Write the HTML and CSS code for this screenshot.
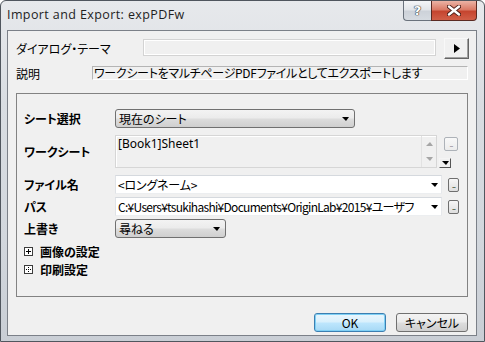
FILE: index.html
```html
<!DOCTYPE html>
<html lang="ja">
<head>
    <meta charset="UTF-8">
    <title>Import and Export: expPDFw</title>
    <link rel="stylesheet" href="styles.css">
</head>
<body>
    <div class="window">
        <div class="titlebar">
            <span class="title">Import and Export: expPDFw</span>
            <div class="caption">
                <span class="cap help">?</span>
                <span class="cap close">
                    <svg width="14" height="11" viewBox="0 0 14 11">
                        <path d="M2 1.5 L12 9.5 M12 1.5 L2 9.5" stroke="#4a1d16" stroke-width="4.2" stroke-linecap="round"/>
                        <path d="M2 1.5 L12 9.5 M12 1.5 L2 9.5" stroke="#fff" stroke-width="2.4" stroke-linecap="round"/>
                    </svg>
                </span>
            </div>
        </div>

        <div class="client">
            <div class="top-row theme-row">
                <span class="theme-lbl">ダイアログ・テーマ</span>
                <span class="theme-box"></span>
                <span class="arrow-btn">
                    <svg width="6" height="9" viewBox="0 0 6 9"><polygon points="0,0 6,4.5 0,9" fill="#000"/></svg>
                </span>
            </div>
            <div class="top-row desc-row">
                <span class="desc-lbl">説明</span>
                <span class="desc-box">ワークシートをマルチページPDFファイルとしてエクスポートします</span>
            </div>

            <div class="group">
                <div class="grow sheet-row">
                    <span class="blbl">シート選択</span>
                    <span class="select sheet-sel">現在のシート<i class="tri"></i></span>
                </div>
                <div class="grow ws-row">
                    <span class="blbl">ワークシート</span>
                    <div class="ws-box">
                        <span class="ws-text">[Book1]Sheet1</span>
                        <div class="ws-scroll">
                            <i class="tri-up"></i>
                            <i class="tri-down"></i>
                        </div>
                    </div>
                    <div class="ws-side">
                        <span class="dots-btn off">...</span>
                        <span class="mini-drop"><i class="tri"></i></span>
                    </div>
                </div>
                <div class="grow file-row">
                    <span class="blbl">ファイル名</span>
                    <span class="combo"><span class="combo-text">&lt;ロングネーム&gt;</span><i class="tri"></i></span>
                    <span class="dots-btn">...</span>
                </div>
                <div class="grow path-row">
                    <span class="blbl">パス</span>
                    <span class="combo"><span class="combo-text path-text">C:¥Users¥tsukihashi¥Documents¥OriginLab¥2015¥ユーザフ</span><i class="tri"></i></span>
                    <span class="dots-btn">...</span>
                </div>
                <div class="grow over-row">
                    <span class="blbl">上書き</span>
                    <span class="select over-sel">尋ねる<i class="tri"></i></span>
                </div>
                <div class="grow tree img-row">
                    <svg class="tree-ico" width="9" height="9" viewBox="0 0 9 9">
                        <rect x="0.5" y="0.5" width="8" height="8" fill="#fff" stroke="#3c3c3c"/>
                        <path d="M2 4.5 H7 M4.5 2 V7" stroke="#000"/>
                    </svg>
                    <span class="tree-lbl">画像の設定</span>
                </div>
                <div class="grow tree print-row">
                    <svg class="tree-ico" width="9" height="9" viewBox="0 0 9 9">
                        <rect x="0.5" y="0.5" width="8" height="8" fill="#fff" stroke="#3c3c3c"/>
                        <rect x="4" y="2" width="1" height="1" fill="#000"/>
                        <rect x="2" y="4" width="1" height="1" fill="#000"/>
                        <rect x="4" y="4" width="1" height="1" fill="#000"/>
                        <rect x="6" y="4" width="1" height="1" fill="#000"/>
                        <rect x="4" y="6" width="1" height="1" fill="#000"/>
                    </svg>
                    <span class="tree-lbl">印刷設定</span>
                </div>
            </div>

            <div class="buttons">
                <span class="btn ok">OK</span>
                <span class="btn">キャンセル</span>
            </div>
        </div>
    </div>
</body>
</html>
```

FILE: styles.css
```css
*{
    margin: 0;
    padding: 0;
    box-sizing: border-box;
}
body{
    font-family: "Noto Sans CJK JP", sans-serif;
    font-size: 12px;
    color: #000;
    font-feature-settings: "palt" 1;
    background: #fff;
}
i{
    display: block;
}
.window{
    width: 485px;
    height: 342px;
    border: 1px solid #50565e;
    border-radius: 6px 6px 0 0;
    padding: 0 7px 5px 6px;
    background: linear-gradient(#e7e9ec, #d9dde2 30%, #d2d7dd 70%, #c9ced5);
    display: flex;
    flex-direction: column;
}
.titlebar{
    height: 29px;
    flex-shrink: 0;
    display: flex;
    align-items: flex-start;
}
.title{
    font-family: "Open Sans", "Noto Sans", sans-serif;
    font-feature-settings: normal;
    font-size: 12.5px;
    letter-spacing: 0.4px;
    line-height: 17px;
    padding-top: 5px;
    color: #1e1e1e;
}
.caption{
    margin-left: auto;
    display: flex;
}
.cap{
    height: 20px;
    display: flex;
    align-items: center;
    justify-content: center;
    border: 1px solid #6a727c;
    border-top: none;
}
.help{
    width: 28px;
    border-right: none;
    border-radius: 0 0 0 4px;
    background: linear-gradient(#f4f5f7, #e2e5e9 45%, #cdd2d9 55%, #d6dbe1);
    font-family: "DejaVu Sans", sans-serif;
    font-weight: bold;
    font-size: 13px;
    color: #fff;
    text-shadow: 0 0 1px #2e3238, 0 0 1px #2e3238, 0 0 1px #2e3238;
}
.close{
    width: 46px;
    border-color: #5a2a22;
    border-radius: 0 0 4px 0;
    background: linear-gradient(#ebb3a5, #da7b67 45%, #c5452f 55%, #d15f48);
}
.client{
    flex: 1;
    border: 1px solid #7b8088;
    background: #f0f0f0;
    display: flex;
    flex-direction: column;
}

/* top part */
.top-row{
    display: flex;
    padding-left: 8px;
}
.theme-row{
    margin-top: 7px;
    height: 21px;
    align-items: center;
}
.theme-lbl{
    width: 127px;
}
.theme-box{
    width: 293px;
    height: 17px;
    align-self: flex-start;
    margin-top: 1px;
    border: 1px solid #d3d3d3;
    box-shadow: inset 1px 1px 0 #fff, inset -1px -1px 0 #fff;
}
.arrow-btn{
    width: 25px;
    height: 21px;
    margin-left: 8px;
    border: 1px solid;
    border-color: #f8f8f8 #646464 #646464 #f8f8f8;
    box-shadow: inset -1px -1px 0 #a0a0a0;
    display: flex;
    align-items: center;
    justify-content: center;
}
.desc-row{
    margin-top: 7px;
    height: 14px;
    align-items: center;
}
.desc-lbl{
    width: 76px;
}
.desc-box{
    width: 376px;
    height: 14px;
    line-height: 12px;
    padding-left: 1px;
    border: 1px solid;
    border-color: #b4b4b4 #fff #fff #b4b4b4;
    white-space: nowrap;
    letter-spacing: -0.3px;
}

/* group */
.group{
    margin: 13px 8px 0 8px;
    height: 204px;
    border: 1px solid #828282;
    display: flex;
    flex-direction: column;
}
.grow{
    display: flex;
    align-items: center;
    padding-left: 7px;
}
.blbl{
    width: 91px;
    flex-shrink: 0;
    font-weight: bold;
}
.tri{
    width: 0;
    height: 0;
    flex-shrink: 0;
    border-left: 4px solid transparent;
    border-right: 3px solid transparent;
    border-top: 4px solid #000;
}
.select{
    height: 19px;
    border: 1px solid #707070;
    border-radius: 3px;
    background: linear-gradient(#f3f3f3, #ebebeb 48%, #dddddd 52%, #cfcfcf);
    display: flex;
    align-items: center;
    justify-content: space-between;
    padding: 0 5px 0 3px;
}
.sheet-row{
    margin-top: 15px;
    height: 19px;
}
.sheet-sel{
    width: 240px;
}
.ws-row{
    margin-top: 7px;
    height: 33px;
}
.ws-box{
    width: 322px;
    height: 33px;
    border: 1px solid #d6d6d6;
    box-shadow: inset 1px 1px 0 #fff;
    display: flex;
}
.ws-text{
    flex: 1;
    padding: 1px 0 0 2px;
    line-height: 14px;
    font-family: "Noto Sans", sans-serif;
    font-feature-settings: normal;
}
.ws-scroll{
    width: 15px;
    border-left: 1px solid #e2e2e2;
    display: flex;
    flex-direction: column;
    align-items: center;
    padding-top: 6px;
    gap: 11px;
}
.tri-up, .tri-down{
    width: 0;
    height: 0;
    border-left: 4px solid transparent;
    border-right: 3px solid transparent;
}
.tri-up{
    border-bottom: 4px solid #a6a6a6;
}
.tri-down{
    border-top: 4px solid #a6a6a6;
}
.ws-side{
    width: 21px;
    height: 33px;
    display: flex;
    flex-direction: column;
    align-items: flex-start;
}
.dots-btn{
    width: 11px;
    height: 14px;
    margin-left: 6px;
    flex-shrink: 0;
    border: 1px solid #6f6f6f;
    border-radius: 2px;
    background: linear-gradient(#f6f6f6, #dedede);
    font-size: 7px;
    line-height: 7px;
    letter-spacing: -1px;
    color: #222;
    display: flex;
    align-items: flex-end;
    justify-content: center;
    padding-bottom: 2px;
    overflow: hidden;
}
.dots-btn.off{
    width: 14px;
    margin: 2px 0 0 7px;
    border-color: #adb2b8;
    color: #8a8a8a;
    background: linear-gradient(#f8f8f8, #ececec);
}
.mini-drop{
    width: 12px;
    height: 11px;
    margin: 7px 0 0 2px;
    border: 1px solid;
    border-color: #f4f4f4 #555 #555 #f4f4f4;
    background: #f0f0f0;
    display: flex;
    align-items: center;
    justify-content: center;
}
.combo{
    width: 327px;
    height: 19px;
    background: #fff;
    border: 1px solid;
    border-color: #d5d9de #e6e8eb #eceef0 #dfe2e6;
    display: flex;
    align-items: center;
    justify-content: space-between;
    padding: 0 3px 0 2px;
    white-space: nowrap;
}
.combo-text{
    max-width: 312px;
    letter-spacing: -0.2px;
}
.path-text{
    letter-spacing: -0.7px;
}
.file-row{
    margin-top: 7px;
    height: 19px;
}
.path-row{
    margin-top: 3px;
    height: 19px;
}
.over-row{
    margin-top: 3px;
    height: 19px;
}
.over-sel{
    width: 111px;
}
.tree{
    height: 18px;
}
.img-row{
    margin-top: 4px;
}
.tree-ico{
    margin-right: 7px;
}
.tree-lbl{
    font-weight: bold;
}

/* bottom buttons */
.buttons{
    margin-top: 16px;
    padding-right: 8px;
    display: flex;
    justify-content: flex-end;
    gap: 10px;
}
.btn{
    width: 72px;
    height: 19px;
    border: 1px solid #707070;
    border-radius: 3px;
    background: linear-gradient(#f3f3f3, #ebebeb 48%, #dddddd 52%, #cfcfcf);
    display: flex;
    align-items: center;
    justify-content: center;
}
.ok{
    border-color: #3c7fb1;
    background: linear-gradient(#eaf6fd, #d9f0fc 48%, #bee6fd 52%, #a7d9f5);
    box-shadow: inset 0 0 0 1px #7fd0f5;
}
```
